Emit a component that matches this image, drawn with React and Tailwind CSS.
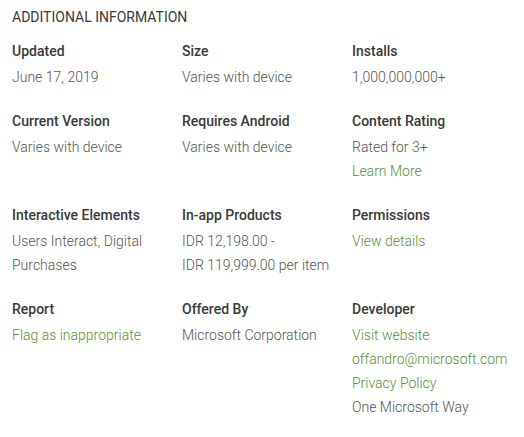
import React from "react";

const items = [
	{ label: "Updated", values: [{ text: "June 17, 2019" }] },
	{ label: "Size", values: [{ text: "Varies with device" }] },
	{ label: "Installs", values: [{ text: "1,000,000,000+" }] },
	{ label: "Current Version", values: [{ text: "Varies with device" }] },
	{ label: "Requires Android", values: [{ text: "Varies with device" }] },
	{
		label: "Content Rating",
		values: [{ text: "Rated for 3+" }, { text: "Learn More", link: true }],
	},
	{
		label: "Interactive Elements",
		values: [{ text: "Users Interact, Digital Purchases" }],
	},
	{
		label: "In-app Products",
		values: [{ text: "IDR 12,198.00 -" }, { text: "IDR 119,999.00 per item" }],
	},
	{ label: "Permissions", values: [{ text: "View details", link: true }] },
	{ label: "Report", values: [{ text: "Flag as inappropriate", link: true }] },
	{ label: "Offered By", values: [{ text: "Microsoft Corporation" }] },
	{
		label: "Developer",
		values: [
			{ text: "Visit website", link: true },
			{ text: "offandro@microsoft.com", link: true },
			{ text: "Privacy Policy", link: true },
			{ text: "One Microsoft Way" },
		],
	},
];

function InfoItem({ label, values }) {
	return (
		<div className="pr-4">
			<div className="h-6 mb-[2px] text-[14px] leading-6 font-medium text-[#3a3a3a]">
				{label}
			</div>
			{values.map((v) => (
				<div
					key={v.text}
					className={
						v.link
							? "text-[14px] leading-6 font-light text-[#5a8f3a]"
							: "text-[14px] leading-6 font-light text-[#555555]"
					}
				>
					{v.text}
				</div>
			))}
		</div>
	);
}

export default function App() {
	return (
		<div
			className="w-[524px] h-[437px] bg-white px-3 pt-[5px]"
			style={{ fontFamily: "Roboto, 'Liberation Sans', sans-serif" }}
		>
			<h2 className="text-[14px] leading-6 font-normal text-[#3a3a3a] uppercase mb-[10px]">
				Additional Information
			</h2>
			<div className="grid grid-cols-[170px_170px_170px] gap-y-[20px]">
				{items.map((it) => (
					<InfoItem key={it.label} {...it} />
				))}
			</div>
		</div>
	);
}
